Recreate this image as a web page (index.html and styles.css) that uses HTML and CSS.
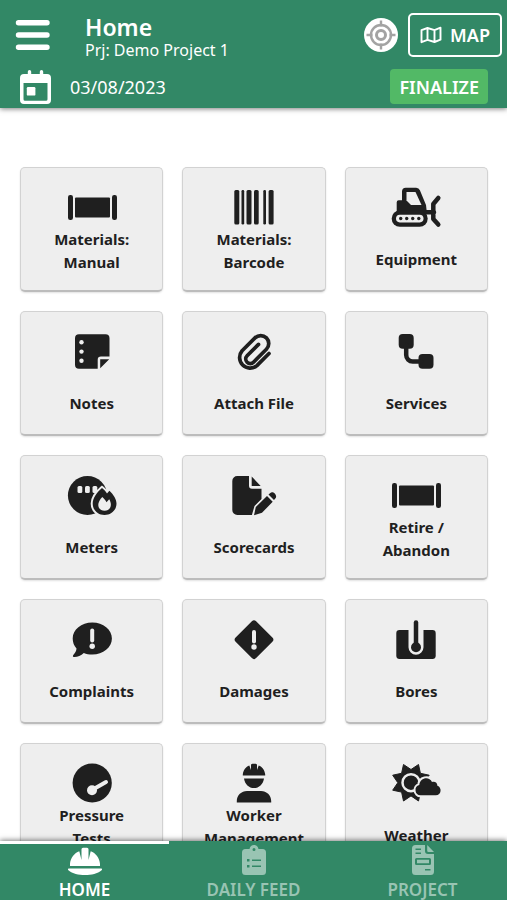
FILE: index.html
```html
<!DOCTYPE html>
<html lang="en">
<head>
<meta charset="utf-8">
<meta name="viewport" content="width=device-width, initial-scale=1">
<title>Home</title>
<link rel="stylesheet" href="styles.css">
</head>
<body>
<svg class="defs" aria-hidden="true">
  <symbol id="pipe" viewBox="0 0 50 40">
    <rect x="1" y="8" width="5" height="25" rx="2.2"/><rect x="8" y="10.500" width="35" height="20" rx="1"/><rect x="45" y="8" width="5" height="25" rx="2.200"/>
  </symbol>
</svg>
<header class="header">
  <div class="row">
    <button class="plain menu" aria-label="Menu">
      <svg width="36" height="32" viewBox="0 0 36 32" fill="none" stroke="currentColor" stroke-width="5.400" stroke-linecap="round"><path d="M3.500 3.700h28.500M3.500 16h28.500M3.500 28.300h28.500"/></svg>
    </button>
    <div class="heading">
      <h1>Home</h1>
      <p>Prj: Demo Project 1</p>
    </div>
    <button class="plain locate" aria-label="My location">
      <svg width="34" height="34" viewBox="0 0 34 34" fill="none" stroke="#a3a3a3" stroke-width="2.400"><circle cx="17" cy="17" r="17" fill="#fff" stroke="none"/><circle cx="17" cy="17" r="10"/><circle cx="17" cy="17" r="4.500" stroke-width="3"/><path d="M17 2.500v6M17 25.500v6M2.500 17h6M25.500 17h6"/></svg>
    </button>
    <button class="map">
      <svg width="22" height="18" viewBox="0 0 22 18" fill="none" stroke="currentColor" stroke-width="1.900" stroke-linejoin="round"><path d="M1.500 4.200L7.500 2l7 2.200 6-2.500v12L14.500 16l-7-2.200-6 2.400zM7.500 2v11.800M14.500 4.200V16"/></svg>
      MAP
    </button>
  </div>
  <div class="row row-date">
    <button class="plain date">
      <svg width="31" height="34" viewBox="0 0 31 34"><path fill="currentColor" fill-rule="evenodd" d="M9.500 0a1.700 1.700 0 0 1 1.700 1.700V4h8.600V1.700a1.700 1.700 0 0 1 3.400 0V4H27a4 4 0 0 1 4 4v22a4 4 0 0 1-4 4H4a4 4 0 0 1-4-4V8a4 4 0 0 1 4-4h3.800V1.700A1.700 1.700 0 0 1 9.500 0zM3.500 13v16.200a1.500 1.500 0 0 0 1.500 1.500h21a1.500 1.500 0 0 0 1.500-1.500V13z"/><rect x="6.800" y="17" width="8.600" height="8.600" rx="1.200" fill="currentColor"/></svg>
      03/08/2023
    </button>
    <button class="finalize">FINALIZE</button>
  </div>
</header>

<main class="content">
  <div class="tiles">
    <button class="tile"><svg viewBox="0 0 50 40"><use href="#pipe"/></svg><span class="label two">Materials:<br>Manual</span></button>
    <button class="tile"><svg viewBox="0 0 50 40"><rect x="5.300" y="3" width="5" height="34.500" rx="1.500"/><rect x="12.500" y="3" width="2.700" height="34.500" rx="1.200"/><rect x="17.500" y="3" width="5" height="34.500" rx="1.500"/><rect x="25" y="3" width="4.700" height="34.500" rx="1.500"/><rect x="34.300" y="3" width="2.700" height="34.500" rx="1.200"/><rect x="39.600" y="3" width="5" height="34.500" rx="1.500"/></svg><span class="label two">Materials:<br>Barcode</span></button>
    <button class="tile"><svg viewBox="0 0 50 40"><path d="M5.700 25V15.200a2 2 0 0 1 2-2H11V4.500A3.800 3.800 0 0 1 14.800.700h10.400a4 4 0 0 1 3.700 2.500L35 18l.8 7z"/><path class="cut" d="M15.500 5h9l6 13H20l-4.500-4.500z"/><rect x=".7" y="23.500" width="36" height="16.300" rx="8.100"/><rect class="cut" x="5" y="27.800" width="27.500" height="7.600" rx="3.800"/><g><circle cx="9.700" cy="31.500" r="1.700"/><circle cx="15.700" cy="31.500" r="1.700"/><circle cx="21.700" cy="31.500" r="1.700"/><circle cx="27.800" cy="31.500" r="1.700"/></g><path class="line" d="M35 25.300h8M47.300 11l-5 6v15l5 5.500"/></svg><span class="label">Equipment</span></button>

    <button class="tile"><svg viewBox="0 0 50 40"><path d="M12 3.300h26.500a4 4 0 0 1 4 4V25.600H34a3.300 3.300 0 0 0-3.300 3.300v8.800H12a4 4 0 0 1-4-4V7.300a4 4 0 0 1 4-4zM33.200 28.300h9l-9 9z"/><g class="cut"><circle cx="14.500" cy="11.300" r="2.200"/><circle cx="14.500" cy="20.600" r="2.200"/><circle cx="14.500" cy="29.700" r="2.200"/></g></svg><span class="label">Notes</span></button>
    <button class="tile"><svg viewBox="0 0 50 40"><path class="line thin" d="M40 22.500L27.900 34.600A10.500 10.500 0 0 1 13.100 19.800L26 6.900A8.060 8.060 0 0 1 37.400 18.300L24.500 31.200A4.500 4.500 0 0 1 18.100 24.800L29.500 13.400"/></svg><span class="label">Attach File</span></button>
    <button class="tile"><svg viewBox="0 0 50 40"><rect x="7.700" y="3" width="15" height="14.800" rx="4"/><rect x="27.500" y="23" width="15" height="14.800" rx="4"/><path class="line" d="M15.200 14v10a6.500 6.500 0 0 0 6.500 6.500H30"/></svg><span class="label">Services</span></button>

    <button class="tile"><svg viewBox="0 0 50 40"><circle cx="20.500" cy="20.500" r="19.600"/><g class="cut"><rect x="10.500" y="11" width="4.800" height="7" rx="1.500"/><rect x="18" y="11" width="4.800" height="7" rx="1.500"/><rect x="25.500" y="11" width="4.800" height="7" rx="1.500"/></g><path class="halo" d="M35 13c2 1.600 3.800 3.500 5 5.400l2.400-2.700c4.200 3.800 7.100 8.800 7.100 12.700C49.500 35 44.300 40 37.500 40S25.700 35 25.700 28.400c0-5 4-10.900 9.300-15.400z"/><path class="cut" d="M35.300 22c1.800 1.600 3.200 3.200 4.200 5.200l2.700-3c3.200 5 1.900 11.500-4.600 11.500-7 0-8.800-7.200-2.300-13.700z"/></svg><span class="label">Meters</span></button>
    <button class="tile"><svg viewBox="0 0 50 40"><path d="M8.300 1H20v9.700a3 3 0 0 0 3 3h9.500V24l-7 7-2.600 9H8.300a5 5 0 0 1-5-5V6a5 5 0 0 1 5-5zM22.700 1.500l9 9.500h-9z"/><path d="M25 40.200l1.800-8.200L38 21l5.700 5.700L33 37.800zM39.500 19.500l1.800-1.600c2.600-2.400 7.600 2.300 5.200 5.300l-1.500 1.900z"/></svg><span class="label">Scorecards</span></button>
    <button class="tile"><svg viewBox="0 0 50 40"><use href="#pipe"/></svg><span class="label two">Retire /<br>Abandon</span></button>

    <button class="tile"><svg viewBox="0 0 50 40"><path d="M25.300 3.400c10.900 0 19.600 7.100 19.600 16s-8.700 16-19.600 16c-3.200 0-6-.5-8.500-1.500C13.900 36.500 10 38.300 6.800 38c-1.100-.1-1.200-1.200-.5-2 1.600-1.800 3.200-4.300 3.200-6.500C7 26.600 5.700 23.200 5.700 19.400c0-8.900 8.700-16 19.600-16z"/><path class="mark" d="M25.200 11.500v10"/><circle class="cut" cx="25.200" cy="27.300" r="2.700"/></svg><span class="label">Complaints</span></button>
    <button class="tile"><svg viewBox="0 0 50 40"><rect x="10.500" y="6.200" width="29" height="29" rx="3" transform="rotate(45 25 20.700)"/><path class="mark" d="M25 13v9.500"/><circle class="cut" cx="25" cy="28" r="2.700"/></svg><span class="label">Damages</span></button>
    <button class="tile"><svg viewBox="0 0 50 40"><path d="M8.500 11h9v17.300a7.500 7.500 0 0 0 15 0V11h9a3.200 3.200 0 0 1 3.200 3.200V37a3.200 3.200 0 0 1-3.200 3h-33a3.200 3.200 0 0 1-3.200-3V14.200A3.200 3.200 0 0 1 8.500 11z"/><path class="line" d="M25 3.500V26"/><circle cx="25" cy="28.300" r="5"/></svg><span class="label">Bores</span></button>

    <button class="tile"><svg viewBox="0 0 50 40"><circle cx="25.200" cy="20" r="19.600"/><path class="mark" d="M25 27l14-8"/><circle class="cut" cx="25" cy="27.300" r="5"/></svg><span class="label two">Pressure<br>Tests</span></button>
    <button class="tile"><svg viewBox="0 0 50 40"><path d="M13.800 12.500v-1C14.200 7 17 3.700 20.300 2.400L22 7V2a1.500 1.500 0 0 1 1.500-1.300h3A1.500 1.500 0 0 1 28 2v5l1.700-4.600c3.400 1.300 6.100 4.600 6.500 9.100v1zM15 15.500h20c-.8 5.800-5 9.600-10 9.600s-9.200-3.800-10-9.600zM7.800 39.500v-1.400C7.800 32.300 12.500 28 18 28h14c5.500 0 10.200 4.300 10.200 10.100v1.400z"/></svg><span class="label two">Worker<br>Management</span></button>
    <button class="tile"><svg viewBox="0 0 50 40"><path stroke="#1f1f1f" stroke-linejoin="round" d="M12.500 1.500L20 6.500 27.500 1.500 29.400 10.300 38.200 12.200 33.200 19.700 38.200 27.200 29.400 29.100 27.500 38 20 32.900 12.500 38 10.600 29.100 1.700 27.200 6.800 19.700 1.700 12.200 10.600 10.300z"/><circle cx="20" cy="19.700" r="8.500" stroke="#eee" stroke-width="2.500"/><path class="halo" d="M29.500 32.300a5.200 5.200 0 0 1-1.200-10.200C28.700 15 38 12.800 41 19c3.200-.9 5.200 1 5.400 3.700 4.800 1.500 4.200 9.600-1.600 9.600z"/></svg><span class="label">Weather</span></button>
  </div>
</main>

<nav class="tabs">
  <a href="#home" class="tab active" aria-current="page">
    <svg width="34" height="28" viewBox="0 0 34 28"><path d="M2 19v-2C2.300 11 6.500 5.800 11.300 4.200L13.500 13V2.300a1.500 1.500 0 0 1 1.500-1.500h4a1.500 1.500 0 0 1 1.500 1.500V13l2.200-8.800C27.500 5.800 31.700 11 32 17v2zM.6 21.500h32.800c.8 0 .8 1.200.2 1.700C29.500 26.700 23.500 28 17 28S4.500 26.700.4 23.200c-.6-.5-.6-1.700.2-1.700z"/></svg>
    HOME
  </a>
  <a href="#daily-feed" class="tab">
    <svg width="24" height="30" viewBox="0 0 24 30"><path fill-rule="evenodd" d="M7.500 4C8 1.500 9.700 0 12 0s4 1.500 4.500 4H20.500A3.500 3.500 0 0 1 24 7.500v19a3.500 3.500 0 0 1-3.500 3.500h-17A3.500 3.500 0 0 1 0 26.500v-19A3.500 3.500 0 0 1 3.500 4zM12 3a1.500 1.500 0 1 0 0 3 1.500 1.500 0 0 0 0-3zM5 14v2.500h2.500V14zM10 14.500v1.500h9v-1.500zM5 20v2.500h2.500V20zM10 20.500V22h9v-1.500z"/></svg>
    DAILY FEED
  </a>
  <a href="#project" class="tab">
    <svg width="22" height="30" viewBox="0 0 22 30"><path fill-rule="evenodd" d="M3.500 0H13v6a3 3 0 0 0 3 3h6v17.500a3.500 3.500 0 0 1-3.500 3.500h-15A3.500 3.500 0 0 1 0 26.500v-23A3.500 3.500 0 0 1 3.500 0zM15.200 0l6.800 7h-5.500a1.300 1.300 0 0 1-1.300-1.300zM3.500 3.500V5H9V3.500zM3.500 7.500V9H9V7.500zM4.500 13A1.500 1.500 0 0 0 3 14.500v4A1.500 1.500 0 0 0 4.500 20h13a1.500 1.500 0 0 0 1.500-1.500v-4a1.500 1.500 0 0 0-1.500-1.500zM5 14.700h12v3.600H5zM13 24v1.500h5.500V24z"/></svg>
    PROJECT
  </a>
</nav>
</body>
</html>
```
FILE: styles.css
```css
* {
  box-sizing: border-box;
}

body {
  margin: 0;
  height: 100vh;
  display: flex;
  flex-direction: column;
  background: #fff;
  color: #1f1f1f;
  font-family: "Noto Sans", "Open Sans", sans-serif;
}

button {
  font: inherit;
  color: inherit;
  cursor: pointer;
}

svg {
  display: block;
  flex: none;
}

.defs {
  position: absolute;
  width: 0;
  height: 0;
}

.header {
  position: relative;
  z-index: 1;
  flex: none;
  padding: 12px 5px 4px 15px;
  background: #328866;
  color: #fff;
  box-shadow: 0 1px 5px rgba(0, 0, 0, 0.5);
}

.row {
  display: flex;
  align-items: center;
}

.plain {
  padding: 0;
  border: 0;
  background: none;
}

.heading {
  flex: 1;
  padding-left: 34px;
}

.heading h1 {
  margin: 0;
  font-size: 23px;
  line-height: 30px;
  font-weight: 600;
}

.heading p {
  margin: 0;
  font-size: 16px;
  line-height: 16px;
}

.map {
  display: flex;
  align-items: center;
  gap: 8px;
  height: 44px;
  margin-left: 10px;
  padding: 0 10px;
  border: 2px solid #fff;
  border-radius: 5px;
  background: none;
  font-size: 18px;
  font-weight: 600;
}

.row-date {
  justify-content: space-between;
  margin-top: 11px;
  padding: 0 14px 0 5px;
}

.date {
  display: flex;
  align-items: center;
  gap: 19px;
  font-size: 18px;
}

.finalize {
  height: 35px;
  padding: 0 9px;
  border: 0;
  border-radius: 4px;
  background: #52b966;
  font-size: 18px;
  font-weight: 600;
}

.content {
  flex: 1;
  min-height: 0;
  overflow-y: auto;
  scrollbar-width: none;
  padding: 59px 19px 20px 20px;
}

.tiles {
  display: grid;
  grid-template-columns: repeat(3, 1fr);
  gap: 19px;
}

.tile {
  display: flex;
  flex-direction: column;
  align-items: center;
  gap: 1px;
  min-width: 0;
  padding: 19px 0 0;
  border: 1px solid #d2d2d2;
  border-bottom: 2px solid #bcbcbc;
  border-radius: 5px;
  background: #eee;
  box-shadow: 0 1px 2px rgba(0, 0, 0, 0.12);
}

.tile svg {
  width: 50px;
  height: 40px;
  overflow: visible;
  fill: #1f1f1f;
}

.tile .cut {
  fill: #eee;
}

.tile .line {
  fill: none;
  stroke: #1f1f1f;
  stroke-width: 4.5;
  stroke-linecap: round;
  stroke-linejoin: round;
}

.tile .thin {
  stroke-width: 3.7;
}

.tile .mark {
  fill: none;
  stroke: #eee;
  stroke-width: 4;
  stroke-linecap: round;
}

.tile .halo {
  stroke: #eee;
  stroke-width: 4;
  paint-order: stroke;
}

.label {
  display: flex;
  align-items: center;
  height: 62px;
  font-size: 15px;
  line-height: 23px;
  font-weight: 700;
}

.label.two {
  display: block;
  text-align: center;
}

.tabs {
  position: relative;
  z-index: 1;
  flex: none;
  display: grid;
  grid-template-columns: repeat(3, 1fr);
  background: #328866;
  box-shadow: 0 -1px 5px rgba(0, 0, 0, 0.5);
}

.tab {
  display: flex;
  flex-direction: column;
  align-items: center;
  justify-content: flex-end;
  height: 59px;
  border-top: 3px solid transparent;
  color: #99c4b3;
  fill: currentColor;
  font-size: 17px;
  line-height: 20px;
  font-weight: 600;
  text-decoration: none;
}

.tab svg {
  margin-bottom: 5px;
}

.tab.active {
  border-top-color: #fff;
  color: #fff;
}
```
